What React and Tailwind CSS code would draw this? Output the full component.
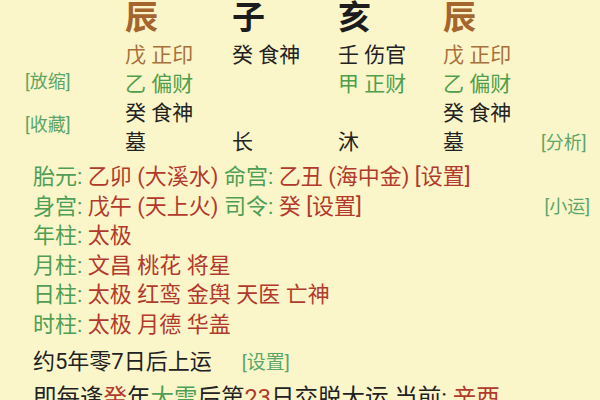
const BROWN = 'text-[#a9703a]'

const PILLARS = [
  {
    zhi: '辰',
    zhiColor: 'text-[#a4652e]',
    hidden: [
      { gan: '戊', god: '正印', color: BROWN },
      { gan: '乙', god: '偏财', color: 'text-[#4f9e4c]' },
      { gan: '癸', god: '食神', color: 'text-[#222]' },
    ],
    stage: '墓',
    w: 'w-[107px]',
  },
  {
    zhi: '子',
    zhiColor: 'text-[#1c1c1c]',
    hidden: [{ gan: '癸', god: '食神', color: 'text-[#222]' }],
    stage: '长',
    w: 'w-[106px]',
  },
  {
    zhi: '亥',
    zhiColor: 'text-[#1c1c1c]',
    hidden: [
      { gan: '壬', god: '伤官', color: 'text-[#222]' },
      { gan: '甲', god: '正财', color: 'text-[#4f9e4c]' },
    ],
    stage: '沐',
    w: 'w-[105px]',
  },
  {
    zhi: '辰',
    zhiColor: 'text-[#a4652e]',
    hidden: [
      { gan: '戊', god: '正印', color: BROWN },
      { gan: '乙', god: '偏财', color: 'text-[#4f9e4c]' },
      { gan: '癸', god: '食神', color: 'text-[#222]' },
    ],
    stage: '墓',
    w: 'w-[98px]',
  },
]

const SHENSHA = [
  { k: '年柱', v: '太极' },
  { k: '月柱', v: '文昌 桃花 将星' },
  { k: '日柱', v: '太极 红鸾 金舆 天医 亡神' },
  { k: '时柱', v: '太极 月德 华盖' },
]

const G = 'text-[#4f9e55]'
const R = 'text-[#b23a2c]'

function Pillar({ p }) {
  const rows = [0, 1, 2].map((i) => p.hidden[i])
  return (
    <div className={`${p.w} flex flex-col shrink-0`}>
      <div className={`h-[36px] leading-[36px] text-[33px] font-semibold ${p.zhiColor}`}>{p.zhi}</div>
      <div className="pt-[5px]">
        {rows.map((h, i) => (
          <div key={i} className={`h-[29px] leading-[29px] text-[21px] ${h ? h.color : ''}`}>
            {h ? `${h.gan} ${h.god}` : ''}
          </div>
        ))}
        <div className="h-[29px] leading-[29px] text-[21px] text-[#222]">{p.stage}</div>
      </div>
    </div>
  )
}

export default function App() {
  return (
    <div className="w-[600px] h-[400px] overflow-hidden bg-[#fbf6c9] font-['Roboto','Noto_Sans_CJK_SC',sans-serif] text-[#222]">
      {/* 排盘 */}
      <div className="flex">
        <div className="w-[125px] shrink-0 pl-[25px] pt-[72px] flex flex-col text-[18px] text-[#5aa66a]">
          <span className="h-[20px] leading-[20px]">[放缩]</span>
          <span className="h-[20px] leading-[20px] mt-[23px]">[收藏]</span>
        </div>
        {PILLARS.map((p, i) => (
          <Pillar key={i} p={p} />
        ))}
        <div className="flex-1 pt-[128px] text-[18px] text-[#5aa66a]">
          <div className="h-[29px] leading-[29px]">[分析]</div>
        </div>
      </div>

      {/* 信息 */}
      <div className="mt-[5px] pl-[33px] pr-[10px] text-[22px]">
        <div className="h-[29.6px] leading-[29.6px] whitespace-nowrap">
          <span className={G}>胎元: </span>
          <span className={R}>乙卯 (大溪水) </span>
          <span className={G}>命宫: </span>
          <span className={R}>乙丑 (海中金) [设置]</span>
        </div>
        <div className="h-[29.6px] leading-[29.6px] whitespace-nowrap flex justify-between">
          <span>
            <span className={G}>身宫: </span>
            <span className={R}>戊午 (天上火) </span>
            <span className={G}>司令: </span>
            <span className={R}>癸 [设置]</span>
          </span>
          <span className="text-[18px] text-[#5aa66a]">[小运]</span>
        </div>
        {SHENSHA.map((s) => (
          <div key={s.k} className="h-[29.6px] leading-[29.6px] whitespace-nowrap">
            <span className={G}>{s.k}: </span>
            <span className={R}>{s.v}</span>
          </div>
        ))}
        <div className="mt-[7px] h-[30px] leading-[30px] whitespace-nowrap">
          约5年零7日后上运<span className="ml-[30px] text-[19px] text-[#5aa66a]">[设置]</span>
        </div>
        <div className="mt-[6px] h-[30px] leading-[30px] whitespace-nowrap text-[23.5px]">
          即每逢<span className={R}>癸</span>年<span className={G}>大雪</span>后第
          <span className={R}>23</span>日交脱大运 当前: <span className={R}>辛酉</span>
        </div>
      </div>
    </div>
  )
}
